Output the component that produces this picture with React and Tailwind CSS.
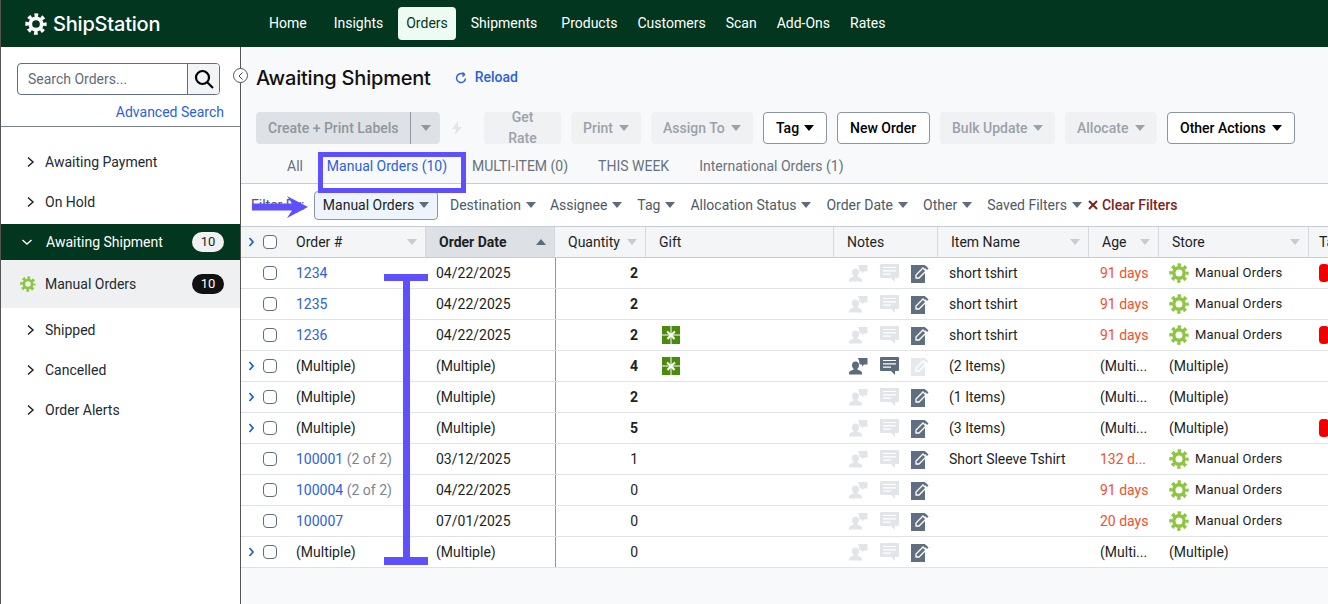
import React from "react";

const Caret = ({ className = "text-[#5f6b7a]" }) => (
  <svg width="10" height="6" viewBox="0 0 10 6" className={`shrink-0 ${className}`}>
    <path d="M0 0h10L5 6z" fill="currentColor" />
  </svg>
);

const Chevron = ({ open, white }) => (
  <svg width="12" height="12" viewBox="0 0 12 12" fill="none" stroke={white ? "#fff" : "#1a1a1a"} strokeWidth="1.4">
    {open ? <path d="M1.5 4 6 8l4.500-4" /> : <path d="M4 1.500 9 6l-5 4.500" />}
  </svg>
);

const Gear = ({ size = 20, color = "#8cc63f" }) => (
  <svg width={size} height={size} viewBox="0 0 20 20" fill="none" className="shrink-0">
    <circle cx="10" cy="10" r="5.2" stroke={color} strokeWidth="3.4" />
    <circle cx="10" cy="10" r="8" stroke={color} strokeWidth="3.4" strokeDasharray="3.3 2.98" strokeDashoffset="1.6" />
  </svg>
);

const PersonIcon = ({ on }) => (
  <svg width="19" height="18" viewBox="0 0 19 18" fill={on ? "#5a6b7e" : "#e1e5e9"}>
    <path d="M9 1h9.500v6.500H15l-2 2V7.500h-2.500c0-2.500-.5-4-1.500-6.500z" />
    <path d="M6.500 4.500c2.300 0 3.500 1.700 3.500 3.800 0 1.500-.6 2.800-1.500 3.500v1c2.500.7 4.500 1.500 4.500 3.200V17.500H0v-1.500c0-1.700 2-2.500 4.500-3.200v-1C3.600 11.100 3 9.800 3 8.300c0-2.100 1.200-3.800 3.500-3.800z" />
  </svg>
);

const CommentIcon = ({ on }) => (
  <svg width="19" height="19" viewBox="0 0 19 19">
    <path d="M1 0h17a1 1 0 0 1 1 1v12a1 1 0 0 1-1 1h-3v4l-4-4H1a1 1 0 0 1-1-1V1a1 1 0 0 1 1-1z" fill={on ? "#5a6b7e" : "#e1e5e9"} />
    <path d="M3 3.500h13M3 6.800h13M3 10.100h8" stroke="#fff" strokeWidth="1.200" />
  </svg>
);

const NoteIcon = ({ off }) => (
  <svg width="18" height="19" viewBox="0 0 18 19">
    <path d="M0 1h14v18H0z" fill={off ? "#e6e9ec" : "#5f6e80"} />
    <path d="M5 14v-3l7-7 3 3-7 7z" fill="none" stroke="#fff" strokeWidth="1.300" />
    <path d="M14.500 1.500l3 3-1.500 1.500-3-3z" fill={off ? "#e6e9ec" : "#5f6e80"} />
  </svg>
);

const Gift = () => (
  <svg width="18" height="18" viewBox="0 0 18 18">
    <rect width="18" height="18" fill="#4a8a0c" />
    <path d="M9 0v18M0 9h18" stroke="#fff" strokeWidth="1" />
    <path d="M9 9 5 5.500M9 9l4-3.500M9 9l-3.500 4M9 9l3.500 4" stroke="#fff" strokeWidth="2" />
  </svg>
);

const ToolBtn = ({ label, width, caret, white }) => (
  <button
    className={`h-8 rounded flex items-center justify-between px-3 font-medium ${width} ${
      white ? "bg-white border border-[#8a96a3] text-black" : "bg-[#f0f1f3] text-[#9aa2ab]"
    }`}
  >
    <span>{label}</span>
    {caret && <Caret className={white ? "text-black" : "text-[#9aa2ab]"} />}
  </button>
);

const SideItem = ({ label }) => (
  <div className="h-10 flex items-center pl-[23px] gap-[9px] text-[#24292f]">
    <Chevron />
    <span>{label}</span>
  </div>
);

const FilterItem = ({ label, className }) => (
  <div className={`flex items-center gap-[5px] text-[#4d5a68] ${className}`}>
    <span>{label}</span>
    <Caret />
  </div>
);

const columns =
  "grid grid-cols-[42px_143px_129px_91px_188px_104px_151px_70px_150px_1fr]";

const Head = ({ label, sorted, bold }) => (
  <div
    className={`flex items-center justify-between pl-[13px] pr-2 border-r border-[#d3d9df] ${
      sorted ? "bg-[#dde1e5] pl-[10px]" : ""
    } ${bold ? "font-bold" : ""}`}
  >
    <span className="text-[#1c1f23]">{label}</span>
    {label !== "Gift" && label !== "Notes" && (
      <svg width="10" height="6" viewBox="0 0 10 6">
        <path d={sorted ? "M0 6h10L5 0z" : "M0 0h10L5 6z"} fill={sorted ? "#5f6b7a" : "#c5ccd3"} />
      </svg>
    )}
  </div>
);

const rows = [
  { id: "1234", date: "04/22/2025", qty: 2, bold: true, item: "short tshirt", age: "91 days", store: true, tag: true },
  { id: "1235", date: "04/22/2025", qty: 2, bold: true, item: "short tshirt", age: "91 days", store: true },
  { id: "1236", date: "04/22/2025", qty: 2, bold: true, gift: true, item: "short tshirt", age: "91 days", store: true, tag: true },
  { multi: true, qty: 4, bold: true, gift: true, item: "(2 Items)", noted: true },
  { multi: true, qty: 2, bold: true, item: "(1 Items)" },
  { multi: true, qty: 5, bold: true, item: "(3 Items)", tag: true },
  { id: "100001", of: "(2 of 2)", date: "03/12/2025", qty: 1, item: "Short Sleeve Tshirt", age: "132 d...", store: true },
  { id: "100004", of: "(2 of 2)", date: "04/22/2025", qty: 0, age: "91 days", store: true },
  { id: "100007", date: "07/01/2025", qty: 0, age: "20 days", store: true },
  { multi: true, qty: 0 , noItem: true },
];

const Row = ({ r }) => (
  <div className={`${columns} h-[31px] bg-white border-b border-[#dfe3e7] items-center text-[#1c1f23]`}>
    <div className="flex items-center h-full pl-[7px]">
      <span className="w-[15px] text-[#1f5fc4]">
        {r.multi && (
          <svg width="7" height="10" viewBox="0 0 7 10" fill="none" stroke="#1f62d0" strokeWidth="1.800">
            <path d="M1.500 1 5 5 1.500 9" />
          </svg>
        )}
      </span>
      <span className="w-[14px] h-[14px] rounded-sm border border-[#5f6e80] bg-white" />
    </div>
    <div className="pl-[13px] whitespace-nowrap">
      {r.multi ? "(Multiple)" : <span className="text-[#2b62d9]">{r.id}</span>}
      {r.of && <span className="text-[#7a8694]"> {r.of}</span>}
    </div>
    <div className="pl-[10px]">{r.multi ? "(Multiple)" : r.date}</div>
    <div className={`h-full flex items-center justify-end pr-2 border-l border-[#8f98a1] ${r.bold ? "font-bold" : ""}`}>{r.qty}</div>
    <div className="pl-[16px] flex items-center">{r.gift && <Gift />}</div>
    <div className="flex items-center pl-[15px] gap-[12px]">
      <PersonIcon on={r.noted} />
      <CommentIcon on={r.noted} />
      <NoteIcon off={r.noted} />
    </div>
    <div className="pl-[11px] whitespace-nowrap">{r.item}</div>
    <div className={`pl-[11px] whitespace-nowrap ${r.age ? "text-[#f4502a]" : ""}`}>
      {r.age || "(Multi..."}
    </div>
    <div className="pl-[10px] flex items-center gap-[6px] whitespace-nowrap">
      {r.store ? (
        <>
          <Gear />
          <span className="text-[13px] tracking-[0.2px]">Manual Orders</span>
        </>
      ) : (
        "(Multiple)"
      )}
    </div>
    <div className="pl-[10px]">
      {r.tag && <span className="block w-[10px] h-[18px] rounded-[4px] bg-[#f00000]" />}
    </div>
  </div>
);

export default function App() {
  return (
    <div className="relative w-[1328px] h-[604px] overflow-hidden bg-white text-[14px] font-['Roboto',sans-serif]">
      <header className="h-[47px] bg-[#02361f] flex items-center border-l border-[#555]">
        <div className="flex items-center w-[256px] pl-[24px] gap-[6px]">
          <Gear size={22} color="#fff" />
          <span className="text-white text-[20px] font-medium tracking-[-0.2px] font-['Inter',sans-serif]">ShipStation</span>
        </div>
        <nav className="flex items-center gap-[2px] text-white">
          <a className="px-3 py-[6px]">Home</a>
          <a className="px-3 py-[6px] ml-[1px]">Insights</a>
          <a className="px-2 py-[6px] ml-[1px] rounded bg-[#edfbf2] text-[#02361f]">Orders</a>
          <a className="px-3 py-[6px] ml-[1px]">Shipments</a>
          <a className="px-2 py-[6px] ml-[2px]">Products</a>
          <a className="px-2 py-[6px] ml-[2px]">Customers</a>
          <a className="px-2 py-[6px] ml-[2px]">Scan</a>
          <a className="px-2 py-[6px] ml-[2px]">Add-Ons</a>
          <a className="px-2 py-[6px] ml-[2px]">Rates</a>
        </nav>
      </header>

      <div className="flex h-[557px]">
        <aside className="w-[241px] shrink-0 border-l border-r border-[#555] bg-white">
          <div className="h-[80px] border-b border-[#7a838c] px-4 pt-4">
            <div className="flex h-[32px] w-[203px] rounded border border-[#5f6e80] overflow-hidden">
              <div className="flex-1 pl-[10px] flex items-center text-[#5f6b7a]">Search Orders...</div>
              <div className="w-[32px] bg-[#f3f4f6] border-l border-[#5f6e80] flex items-center justify-center">
                <svg width="20" height="20" viewBox="0 0 20 20" fill="none" stroke="#000" strokeWidth="2.200">
                  <circle cx="8.500" cy="8.500" r="6.500" />
                  <path d="M13 13l6 6" />
                </svg>
              </div>
            </div>
            <div className="w-[207px] text-right mt-[7px] text-[#2b62d9]">Advanced Search</div>
          </div>
          <div className="pt-[15px]">
            <SideItem label="Awaiting Payment" />
            <SideItem label="On Hold" />
            <div className="mt-[2px] h-[36px] bg-[#02361f] text-white flex items-center pl-[20px] pr-4">
              <Chevron open white />
              <span className="ml-[13px] flex-1">Awaiting Shipment</span>
              <span className="w-8 h-5 rounded-full bg-[#eff1f3] text-[#1c1f23] text-center leading-5 text-[13px]">10</span>
            </div>
            <div className="h-[48px] bg-[#eff0f2] flex items-center pl-[19px] pr-4 text-[#24292f]">
              <Gear size={16} />
              <span className="ml-[9px] flex-1">Manual Orders</span>
              <span className="w-8 h-5 rounded-full bg-[#111] text-white text-center leading-5 text-[13px]">10</span>
            </div>
            <div className="h-[2px]" />
            <SideItem label="Shipped" />
            <SideItem label="Cancelled" />
            <SideItem label="Order Alerts" />
          </div>
        </aside>

        <main className="flex-1 min-w-0 bg-[#f8f9fb] overflow-hidden">
          <div className="h-[65px] pl-[15px] flex items-center pb-[4px]">
            <h1 className="text-[20px] font-medium text-[#111] font-['Inter',sans-serif] tracking-[-0.2px]">Awaiting Shipment</h1>
            <div className="ml-6 flex items-center gap-[8px] text-[#2b62d9] font-medium">
              <svg width="12" height="12" viewBox="0 0 12 12" fill="none" stroke="#2b62d9" strokeWidth="1.500">
                <path d="M10.500 6.500A4.500 4.500 0 1 1 8.500 2.300" />
                <path d="M7.500 0.500 9.500 2.500 7.500 4.500" />
              </svg>
              Reload
            </div>
          </div>

          <div className="flex items-center pl-[15px] gap-[10px]">
            <div className="h-8 w-[184px] rounded bg-[#dee1e5] text-[#8f97a0] font-medium flex items-center">
              <span className="w-[155px] pl-3 border-r border-[#8f97a0] h-full flex items-center">Create + Print Labels</span>
              <span className="flex-1 flex justify-center"><Caret className="text-[#8f97a0]" /></span>
            </div>
            <svg width="12" height="14" viewBox="0 0 12 14" className="mx-[1px]">
              <path d="M7 0 1 8h4l-1 6 7-8H7z" fill="#e3e6e9" />
            </svg>
            <div className="flex items-center gap-[10px] ml-[10px]">
              <ToolBtn label="Get Rate" width="w-[77px]" />
              <ToolBtn label="Print" width="w-[70px]" caret />
              <ToolBtn label="Assign To" width="w-[102px]" caret />
              <ToolBtn label="Tag" width="w-[64px]" caret white />
              <ToolBtn label="New Order" width="w-[93px]" white />
              <ToolBtn label="Bulk Update" width="w-[115px]" caret />
              <ToolBtn label="Allocate" width="w-[92px]" caret />
              <ToolBtn label="Other Actions" width="w-[128px]" caret white />
            </div>
          </div>

          <div className="h-[40px] mt-[0px] border-b border-[#c5ccd4] flex items-end pb-[2px] text-[#66727f]">
            <span className="ml-[46px] h-[30px] flex items-center">All</span>
            <span className="ml-[16px] w-[136px] h-[30px] flex items-center justify-center text-[#2b62d9]">Manual Orders (10)</span>
            <span className="ml-[17px] h-[30px] flex items-center">MULTI-ITEM (0)</span>
            <span className="ml-[30px] h-[30px] flex items-center">THIS WEEK</span>
            <span className="ml-[30px] h-[30px] flex items-center">International Orders (1)</span>
          </div>

          <div className="h-[43px] bg-white flex items-center pl-[10px] border-b border-[#c5ccd4]">
            <span className="w-[63px] text-[#4d5a68]">Filter By:</span>
            <div className="w-[124px] h-[29px] rounded-sm bg-[#edf4fb] border border-[#8a96a3] flex items-center justify-center gap-[5px] text-[#1c1f23]">
              Manual Orders
              <Caret />
            </div>
            <FilterItem label="Destination" className="ml-3" />
            <FilterItem label="Assignee" className="ml-[14px]" />
            <FilterItem label="Tag" className="ml-[15px]" />
            <FilterItem label="Allocation Status" className="ml-[15px]" />
            <FilterItem label="Order Date" className="ml-[15px]" />
            <FilterItem label="Other" className="ml-[15px]" />
            <FilterItem label="Saved Filters" className="ml-[15px]" />
            <div className="ml-[6px] flex items-center gap-1 text-[#7d2318] font-medium">
              <svg width="10" height="10" viewBox="0 0 10 10" stroke="#7d2318" strokeWidth="2">
                <path d="M1 1l8 8M9 1l-8 8" />
              </svg>
              Clear Filters
            </div>
          </div>

          <div className={`${columns} h-[31px] bg-[#f3f5f7] border-b border-[#c5ccd4]`}>
            <div className="flex items-center pl-[7px]">
              <span className="w-[15px]">
                <svg width="7" height="10" viewBox="0 0 7 10" fill="none" stroke="#1f62d0" strokeWidth="1.800">
                  <path d="M1.500 1 5 5 1.500 9" />
                </svg>
              </span>
              <span className="w-[14px] h-[14px] rounded-sm border border-[#5f6e80] bg-white" />
            </div>
            <Head label="Order #" />
            <Head label="Order Date" sorted bold />
            <Head label="Quantity" />
            <Head label="Gift" />
            <Head label="Notes" />
            <Head label="Item Name" />
            <Head label="Age" />
            <Head label="Store" />
            <div className="pl-[10px] flex items-center text-[#1c1f23]">Tag</div>
          </div>

          {rows.map((r, i) => (
            <Row key={i} r={r} />
          ))}
        </main>
      </div>

      {/* collapse toggle */}
      <div className="absolute left-[233px] top-[68px] w-[15px] h-[15px] rounded-full border border-[#555] bg-white flex items-center justify-center">
        <svg width="6" height="8" viewBox="0 0 6 8" fill="none" stroke="#444" strokeWidth="1">
          <path d="M4.500 0.500 1 4l3.500 3.500" />
        </svg>
      </div>

      {/* annotations drawn on the screenshot */}
      <div className="absolute left-[318px] top-[152px] w-[148px] h-[41px] border-[5px] border-[#5f50ff]" />
      <svg className="absolute left-[252px] top-[196px]" width="56" height="22" viewBox="0 0 56 22">
        <path d="M0 7.500h40L35 0l21 11-21 11 5-7.500H0z" fill="#5f50ff" />
      </svg>
      <div className="absolute left-[384px] top-[274px] w-[44px] h-[7px] bg-[#5f50ff]" />
      <div className="absolute left-[403px] top-[281px] w-[7px] h-[277px] bg-[#5f50ff]" />
      <div className="absolute left-[384px] top-[557px] w-[44px] h-[8px] bg-[#5f50ff]" />
    </div>
  );
}
